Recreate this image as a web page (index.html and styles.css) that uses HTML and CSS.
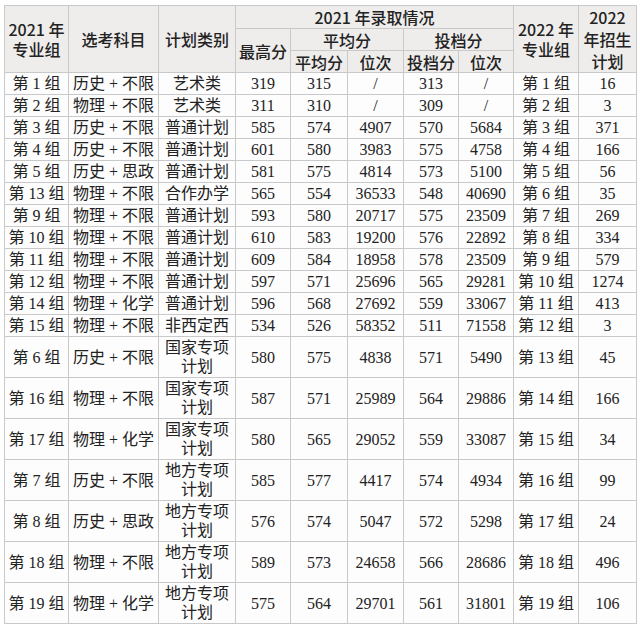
FILE: index.html
```html
<!DOCTYPE html>
<html lang="zh-CN">
<head>
<meta charset="utf-8">
<link rel="stylesheet" href="styles.css">
</head>
<body>
<table class="grid">
<colgroup>
<col class="c1"><col class="c2"><col class="c3"><col class="c4"><col class="c5"><col class="c6"><col class="c7"><col class="c8"><col class="c9"><col class="c10">
</colgroup>
<thead>
<tr class="h1">
<th rowspan="3" class="two">2021 年<br>专业组</th>
<th rowspan="3">选考科目</th>
<th rowspan="3">计划类别</th>
<th colspan="5">2021 年录取情况</th>
<th rowspan="3" class="two">2022 年<br>专业组</th>
<th rowspan="3" class="three">2022<br>年招生<br>计划</th>
</tr>
<tr class="h2">
<th rowspan="2" class="low">最高分</th>
<th colspan="2">平均分</th>
<th colspan="2">投档分</th>
</tr>
<tr class="h3">
<th>平均分</th><th>位次</th><th>投档分</th><th>位次</th>
</tr>
</thead>
<tbody>
<tr class="s"><td>第 1 组</td><td>历史 + 不限</td><td>艺术类</td><td>319</td><td>315</td><td>/</td><td>313</td><td>/</td><td>第 1 组</td><td>16</td></tr>
<tr class="s"><td>第 2 组</td><td>物理 + 不限</td><td>艺术类</td><td>311</td><td>310</td><td>/</td><td>309</td><td>/</td><td>第 2 组</td><td>3</td></tr>
<tr class="s"><td>第 3 组</td><td>历史 + 不限</td><td>普通计划</td><td>585</td><td>574</td><td>4907</td><td>570</td><td>5684</td><td>第 3 组</td><td>371</td></tr>
<tr class="s"><td>第 4 组</td><td>历史 + 不限</td><td>普通计划</td><td>601</td><td>580</td><td>3983</td><td>575</td><td>4758</td><td>第 4 组</td><td>166</td></tr>
<tr class="s"><td>第 5 组</td><td>历史 + 思政</td><td>普通计划</td><td>581</td><td>575</td><td>4814</td><td>573</td><td>5100</td><td>第 5 组</td><td>56</td></tr>
<tr class="s"><td>第 13 组</td><td>物理 + 不限</td><td>合作办学</td><td>565</td><td>554</td><td>36533</td><td>548</td><td>40690</td><td>第 6 组</td><td>35</td></tr>
<tr class="s"><td>第 9 组</td><td>物理 + 不限</td><td>普通计划</td><td>593</td><td>580</td><td>20717</td><td>575</td><td>23509</td><td>第 7 组</td><td>269</td></tr>
<tr class="s"><td>第 10 组</td><td>物理 + 不限</td><td>普通计划</td><td>610</td><td>583</td><td>19200</td><td>576</td><td>22892</td><td>第 8 组</td><td>334</td></tr>
<tr class="s"><td>第 11 组</td><td>物理 + 不限</td><td>普通计划</td><td>609</td><td>584</td><td>18958</td><td>578</td><td>23509</td><td>第 9 组</td><td>579</td></tr>
<tr class="s"><td>第 12 组</td><td>物理 + 不限</td><td>普通计划</td><td>597</td><td>571</td><td>25696</td><td>565</td><td>29281</td><td>第 10 组</td><td>1274</td></tr>
<tr class="s"><td>第 14 组</td><td>物理 + 化学</td><td>普通计划</td><td>596</td><td>568</td><td>27692</td><td>559</td><td>33067</td><td>第 11 组</td><td>413</td></tr>
<tr class="s"><td>第 15 组</td><td>物理 + 不限</td><td>非西定西</td><td>534</td><td>526</td><td>58352</td><td>511</td><td>71558</td><td>第 12 组</td><td>3</td></tr>
<tr class="d"><td>第 6 组</td><td>历史 + 不限</td><td>国家专项<br>计划</td><td>580</td><td>575</td><td>4838</td><td>571</td><td>5490</td><td>第 13 组</td><td>45</td></tr>
<tr class="d"><td>第 16 组</td><td>物理 + 不限</td><td>国家专项<br>计划</td><td>587</td><td>571</td><td>25989</td><td>564</td><td>29886</td><td>第 14 组</td><td>166</td></tr>
<tr class="d"><td>第 17 组</td><td>物理 + 化学</td><td>国家专项<br>计划</td><td>580</td><td>565</td><td>29052</td><td>559</td><td>33087</td><td>第 15 组</td><td>34</td></tr>
<tr class="d"><td>第 7 组</td><td>历史 + 不限</td><td>地方专项<br>计划</td><td>585</td><td>577</td><td>4417</td><td>574</td><td>4934</td><td>第 16 组</td><td>99</td></tr>
<tr class="d"><td>第 8 组</td><td>历史 + 思政</td><td>地方专项<br>计划</td><td>576</td><td>574</td><td>5047</td><td>572</td><td>5298</td><td>第 17 组</td><td>24</td></tr>
<tr class="d"><td>第 18 组</td><td>物理 + 不限</td><td>地方专项<br>计划</td><td>589</td><td>573</td><td>24658</td><td>566</td><td>28686</td><td>第 18 组</td><td>496</td></tr>
<tr class="d"><td>第 19 组</td><td>物理 + 化学</td><td>地方专项<br>计划</td><td>575</td><td>564</td><td>29701</td><td>561</td><td>31801</td><td>第 19 组</td><td>106</td></tr>
</tbody>
</table>
</body>
</html>
```

FILE: styles.css
```css
html, body {
  margin: 0;
  padding: 0;
  background: #ffffff;
}

body {
  padding: 5px 4px 0 4px;
}

.grid {
  border-collapse: collapse;
  table-layout: fixed;
  width: 632px;
  color: #222222;
}

.c1 { width: 64px; }
.c2 { width: 90px; }
.c3 { width: 77px; }
.c4 { width: 55px; }
.c5 { width: 57px; }
.c6 { width: 56px; }
.c7 { width: 55px; }
.c8 { width: 55px; }
.c9 { width: 65px; }
.c10 { width: 58px; }

.grid th,
.grid td {
  border: 1px solid #c9c9c9;
  padding: 0;
  text-align: center;
  vertical-align: middle;
  white-space: nowrap;
  overflow: hidden;
}

.grid th {
  background: #eeedeb;
  font-family: "Noto Sans CJK SC", "Noto Sans", sans-serif;
  font-weight: 500;
  font-size: 16px;
  line-height: 20px;
}

.grid th.three {
  line-height: 22px;
}

.h1 th { height: 22px; }
.h2 th { height: 21px; }
.h3 th { height: 21px; }

.grid td {
  background: #fdfdfd;
  font-family: "Liberation Serif", "Noto Sans CJK SC", serif;
  font-size: 16px;
  line-height: 19px;
}

.s td { height: 21px; }
.d td { height: 40px; }
```
